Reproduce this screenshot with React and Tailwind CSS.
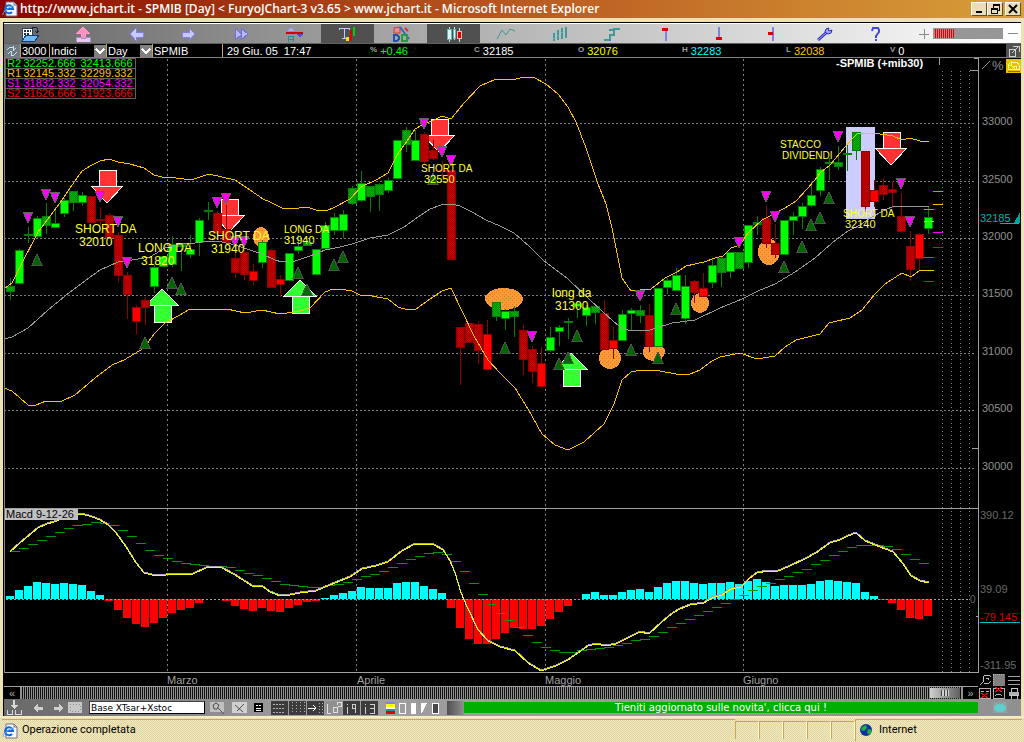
import React from 'react';

// [kind, bodyTop, bodyBottom, high, low]; capital letter = bright body
const candles = [
  ['g', 286, 292, 278, 300], ['G', 250, 284, 249, 284], ['g', 234, 236, 227, 243], ['G', 218, 237, 216, 238],
  ['g', 216, 226, 203, 234], ['G', 223, 228, 207, 228], ['G', 200, 214, 198, 217], ['g', 191, 203, 191, 211],
  ['G', 195, 203, 192, 206], ['r', 196, 223, 196, 223], ['r', 219, 221, 207, 225], ['r', 215, 238, 213, 238],
  ['r', 235, 276, 232, 282], ['r', 275, 295, 272, 319], ['R', 307, 322, 305, 334], ['r', 300, 308, 297, 325],
  ['G', 267, 287, 265, 293], ['G', 256, 267, 256, 267], ['G', 244, 265, 236, 267], ['g', 244, 247, 243, 271],
  ['G', 249, 255, 235, 258], ['G', 220, 243, 218, 256], ['g', 210, 212, 202, 220], ['r', 213, 234, 211, 234],
  ['r', 229, 243, 205, 243], ['r', 258, 273, 253, 278], ['r', 252, 275, 250, 280], ['R', 271, 281, 264, 285],
  ['G', 242, 263, 240, 268], ['r', 250, 288, 249, 288], ['R', 279, 285, 275, 297], ['G', 253, 281, 253, 281],
  ['G', 246, 251, 235, 254], ['g', 242, 246, 240, 246], ['G', 249, 275, 249, 275], ['G', 225, 249, 222, 249],
  ['G', 217, 231, 213, 235], ['G', 214, 231, 210, 238], ['g', 188, 204, 186, 205], ['G', 183, 201, 171, 202],
  ['g', 186, 197, 186, 212], ['g', 184, 195, 183, 211], ['G', 180, 191, 178, 193], ['G', 140, 179, 140, 179],
  ['g', 130, 145, 127, 152], ['G', 140, 161, 130, 161], ['r', 134, 162, 132, 165], ['r', 150, 159, 140, 160],
  ['r', 170, 172, 161, 178], ['r', 170, 260, 170, 260], ['r', 327, 348, 327, 385], ['r', 323, 343, 323, 343],
  ['r', 324, 351, 321, 364], ['R', 334, 370, 320, 370], ['g', 302, 317, 302, 321], ['G', 311, 319, 309, 330],
  ['g', 311, 317, 306, 337], ['r', 330, 360, 325, 375], ['r', 349, 372, 346, 383], ['R', 363, 387, 347, 387],
  ['G', 337, 351, 327, 352], ['G', 327, 332, 325, 346], ['g', 321, 323, 318, 339], ['G', 303, 307, 302, 318],
  ['G', 307, 316, 305, 326], ['g', 306, 313, 306, 324], ['r', 313, 350, 300, 350], ['R', 340, 349, 327, 359],
  ['G', 314, 341, 310, 341], ['G', 310, 314, 308, 331], ['g', 310, 316, 305, 323], ['r', 315, 347, 304, 352],
  ['G', 288, 347, 288, 347], ['G', 280, 288, 278, 294], ['G', 275, 291, 268, 291], ['G', 286, 319, 275, 324],
  ['r', 281, 293, 280, 303], ['R', 288, 297, 273, 297], ['G', 265, 283, 259, 288], ['g', 258, 273, 256, 287],
  ['G', 252, 272, 252, 278], ['g', 252, 269, 252, 269], ['G', 225, 263, 225, 268], ['G', 222, 225, 216, 235],
  ['r', 218, 244, 206, 248], ['r', 243, 255, 224, 258], ['G', 220, 255, 220, 255], ['G', 216, 221, 212, 235],
  ['G', 206, 217, 203, 229], ['G', 195, 206, 182, 207], ['G', 169, 191, 167, 196], ['g', 162, 164, 158, 180],
  ['g', 162, 167, 146, 170], ['g', 153, 155, 145, 171], ['g', 132, 151, 132, 160], ['r', 151, 207, 151, 212],
  ['R', 190, 202, 180, 207], ['r', 185, 195, 178, 200], ['r', 189, 193, 181, 208], ['r', 216, 232, 193, 233],
  ['r', 246, 270, 231, 281], ['R', 234, 259, 233, 271], ['G', 217, 229, 206, 234],
];

const candleFill = { G: '#00ff00', g: '#00b400', R: '#ff0000', r: '#cc0000' };
const candleEdge = { G: '#008000', g: '#008000', R: '#900000', r: '#900000' };

const upperBand = '4,289 12,283 20,267 38,232 48,219 60,203 70,188 82,171 92,165 100,161 109,159 118,162 130,164 144,168 154,175 162,177 176,178 191,180 209,174 222,177 235,180 250,190 263,199 270,202 282,208 291,209 307,207 316,210 326,211 335,207 350,199 361,187 376,180 388,173 393,163 397,155 407,141 415,129 424,124 432,121 442,116 451,119 464,103 480,86 496,79 516,79 524,77 533,77 546,84 558,94 568,107 576,122 586,148 598,184 606,204 612,228 618,258 622,278 631,291 640,290 651,289 665,278 677,272 686,266 704,262 715,258 723,256 731,248 740,245 748,233 762,220 776,213 785,208 796,201 808,188 814,181 821,172 830,165 840,153 851,140 857,134 865,133 880,134 893,136 902,140 910,138 920,141 929,141';
const middleBand = '4,339 12,337 28,328 48,310 65,296 82,283 100,270 118,262 132,260 150,257 165,248 180,244 195,243 210,241 222,242 235,245 250,250 262,254 275,260 282,262 295,261 310,256 325,250 340,247 352,244 370,238 388,235 404,227 418,217 430,209 441,205 452,204 460,206 472,212 486,220 500,226 514,233 530,247 543,260 568,279 590,300 614,322 622,328 631,331 650,330 672,323 695,320 720,308 742,299 758,291 775,284 795,272 815,258 832,243 848,231 860,225 870,218 885,210 894,206 905,207 920,206 929,206';
const lowerBand = '4,388 12,391 20,398 28,405 36,405 46,401 62,401 75,395 95,378 112,365 124,360 144,348 154,334 165,323 178,316 190,309 227,309 245,313 262,310 280,314 300,311 310,308 325,292 333,289 340,289 352,291 360,295 372,296 388,299 398,307 408,310 416,309 430,299 442,291 451,288 474,336 488,360 500,373 515,388 528,409 542,434 555,445 568,450 584,442 604,424 614,404 622,380 631,372 641,370 660,371 676,374 690,374 700,370 712,361 720,357 740,353 757,359 775,356 785,347 796,340 820,334 829,323 850,318 862,310 875,294 885,284 902,273 911,277 920,270 929,270';
const macdLine = '10,551 20,542 38,527 47,523 54,521 62,518 78,514 82,513 92,516 100,519 108,524 116,532 126,546 136,562 144,572 152,574 166,574 180,573 191,574 208,566 220,566 235,574 252,585 262,585 270,591 280,595 290,594 300,592 316,590 330,584 340,580 350,576 362,568 376,565 388,561 402,550 415,543 434,544 443,549 450,560 455,572 461,592 467,606 478,629 488,640 500,646 515,650 528,662 541,670 556,665 568,659 588,645 596,643 606,645 616,643 628,637 640,631 649,633 662,621 673,612 680,608 690,604 704,602 712,597 722,594 731,588 741,586 750,577 757,572 768,570 776,571 790,565 805,558 816,552 830,542 840,539 848,535 856,532 865,540 875,544 885,548 893,551 903,563 911,575 920,580 929,582';

const histogram = [
  3, 9, 13, 17, 16, 15, 16, 15, 14, 8, 4, -2, -11, -19, -25, -28, -24, -19, -14, -11, -9, -4, 0, 0, -2, -7, -10, -12, -9, -12, -13, -9, -6, -3, -2,
  1, 4, 6, 8, 12, 11, 11, 11, 16, 17, 17, 13, 10, 6, -9, -29, -40, -45, -45, -40, -34, -29, -30, -30, -27, -20, -13, -7,
  0, 5, 7, 4, 4, 7, 9, 10, 7, 12, 16, 18, 18, 16, 15, 16, 16, 17, 15, 18, 20, 17, 13, 14, 14, 14, 15, 18, 19, 18, 17, 16,
  7, 3, -1, -4, -11, -19, -20, -17,
];

const signal = [
  551, 548, 544, 540, 536, 532, 528, 525, 524, 522, 523, 525, 530, 536, 543, 550, 555, 558, 561, 563, 564, 565, 566, 566, 567, 570,
  573, 575, 578, 581, 584, 585, 586, 587, 587, 585, 584, 582, 579, 576, 574, 571, 567, 563, 559, 556, 553, 552, 554, 561, 571, 583,
  594, 604, 613, 620, 627, 635, 642, 647, 650, 652, 652, 650, 649, 648, 647, 645, 643, 640, 639, 636, 632, 627, 623, 619, 615, 611,
  607, 603, 599, 595, 590, 586, 583, 579, 576, 572, 569, 564, 560, 555, 551, 547, 545, 545, 545, 546, 549, 554, 559, 563,
];

const sellMarks = [
  [28, 212], [46, 189], [55, 192], [100, 191], [118, 216], [127, 257], [217, 197], [226, 193], [235, 236], [244, 236], [424, 118],
  [442, 146], [451, 155], [532, 331], [640, 290], [739, 237], [766, 191], [775, 211], [838, 131], [901, 178], [910, 216],
];
const buyMarks = [
  [37, 254], [172, 277], [181, 283], [145, 337], [298, 267], [307, 284], [334, 259], [343, 251], [433, 173], [505, 342], [559, 358],
  [568, 352], [577, 330], [631, 344], [658, 352], [676, 303], [802, 241], [784, 261], [811, 219], [820, 212], [829, 192],
];
const sellArrows = [[107, 170], [229, 199], [439, 119], [891, 132]];
const buyArrows = [[162, 289], [300, 280], [571, 353]];
const circles = [[504, 299, 19, 11], [261, 237, 8, 10], [610, 358, 11, 11], [654, 352, 11, 9], [700, 303, 9, 10], [769, 252, 11, 13]];
const notes = [
  ['SHORT DA', 75, 233, 12], ['32010', 79, 246, 12], ['LONG DA', 138, 252, 12], ['31820', 141, 265, 12],
  ['SHORT DA', 208, 240, 12], ['31940', 211, 253, 12], ['LONG DA', 284, 233, 10], ['31940', 284, 244, 11],
  ['SHORT DA', 421, 172, 10], ['32550', 424, 183, 11], ['long da', 552, 297, 12], ['31300', 555, 310, 12],
  ['STACCO', 780, 148, 10], ['DIVIDENDI', 782, 159, 10], ['SHORT DA', 843, 217, 10], ['32140', 845, 228, 11],
];
const priceTicks = [[33000, 123], [32500, 181], [32000, 238], [31500, 295], [31000, 353], [30500, 410], [30000, 468]];
const pivotTicks = [
  [933, 191, '#00ff00'], [933, 204, '#ffc000'], [924, 209, '#00ff00'], [924, 221, '#ffc000'], [933, 232, '#ff00ff'],
  [933, 247, '#ff0000'], [924, 257, '#ff00ff'], [924, 270, '#ffc000'], [924, 281, '#ff0000'],
];

const pivots = [
  ['R2', '32252.666', '32413.666', 'text-[#00ff00]'],
  ['R1', '32145.332', '32299.332', 'text-[#ffc000]'],
  ['S1', '31832.332', '32054.332', 'text-[#ff00ff]'],
  ['S2', '31626.666', '31923.666', 'text-[#ff0000]'],
];

const quotes = [
  ['%', '+0.46', 'text-[#00ff00]'],
  ['C', '32185', 'text-white'],
  ['O', '32076', 'text-[#ffff00]'],
  ['H', '32283', 'text-[#00ffff]'],
  ['L', '32038', 'text-[#ffc000]'],
  ['V', '0', 'text-white'],
];

const Icon = ({ w = 20, h = 16, smooth = false, children }) => (
  <svg
    width={w}
    height={h}
    viewBox={`0 0 ${w} ${h}`}
    fill="none"
    shapeRendering={smooth ? 'auto' : 'crispEdges'}
    aria-hidden="true"
  >
    {children}
  </svg>
);

const tools = [
  ['Open', (
    <>
      <path d="M2 2h10v10H2z" fill="#fff" stroke="#304060" />
      <path d="M4 4h2v2H4zM7 4h2v2H7zM4 7h2v2H4zM7 7h2v2H7zM10 4h1v2h-1z" fill="#203050" />
      <path d="M2 15l4-6h13l-4 6z" fill="#70b8f0" stroke="#103c80" />
      <path d="M11 3l3-2 3 1v4M15 5l2 2 2-2" stroke="#102040" />
    </>
  )],
  ['Upload', (
    <>
      <path d="M10 1l6 6h-4v5H8V7H4z" fill="#ff90c0" stroke="#ffa0d0" />
      <path d="M3 11h5v1h4v-1h5v5H3z" fill="#e8c8f0" stroke="#a890c8" />
    </>
  )],
  ['Back', <path d="M4 8l6-6v4h7v5h-7v4z" fill="#c8c8ff" stroke="#8080e0" />],
  ['Forward', <path d="M16 8l-6-6v4H3v5h7v4z" fill="#c8c8ff" stroke="#8080e0" />],
  ['Last', <path d="M3 2l6 6V2l7 6-7 6V9l-6 5z" fill="#b8b8ff" stroke="#7070d8" />],
  ['Compare', (
    <>
      <path d="M2 5l4-4 4 4z" fill="#b0b0c8" stroke="#8888d8" />
      <path d="M1 7h17" stroke="#d00000" strokeWidth="2" />
      <path d="M12 8h6l-3 4z" fill="#5050c0" />
      <path d="M3 16v-6h5v6M3 13h5" stroke="#209090" />
    </>
  )],
  ['Text', (
    <>
      <path d="M1 4V2h10v2M6 2v10M4 12h4" stroke="#c8c8ff" />
      <path d="M15 1h2v9h-2z" fill="#00d000" />
      <path d="M12 4h2v11h-2z" fill="#e00000" />
      <path d="M8 11h3v4H8z" fill="#ffe000" />
    </>
  )],
  ['Draw', (
    <>
      <path d="M3 2l6-1v6H3z" fill="#e09090" stroke="#c04040" />
      <path d="M9 1l9 12" stroke="#4060b0" strokeWidth="2" />
      <path d="M3 9h3l2 2v2l-2 2H3z" stroke="#2050b0" strokeWidth="2" />
      <path d="M11 9h5v6h-5z" stroke="#20a040" strokeWidth="2" />
      <path d="M14 2l3 3" stroke="#d03030" strokeWidth="2" />
    </>
  )],
  ['Candles', (
    <>
      <path d="M6 1v15M11 1v13M16 2v14" stroke="#b0f0f0" />
      <path d="M4 3h4v10H4zM10 3h2v9h-2z" fill="#d8ffff" stroke="#70b0b0" />
      <path d="M14 5h4v7h-4z" fill="#e00000" stroke="#ffb0b0" />
    </>
  )],
  ['Line', <path d="M1 13l5-9 4 5 4-6 5 2" stroke="#409898" />],
  ['Bars', (
    <>
      <path d="M5 15V7M9 14V4M13 13V2M17 12V1" stroke="#409898" strokeWidth="2" />
      <path d="M3 12h2M7 9h2M11 6h2" stroke="#80c8c8" />
    </>
  )],
  ['Steps', <path d="M2 14h6V9h4V3h6M7 4h5" stroke="#409898" strokeWidth="2" />],
  ['High marker', (
    <>
      <path d="M11 4v11" stroke="#8080e0" strokeWidth="2" />
      <path d="M7 2h6v3H7z" fill="#e00000" />
    </>
  )],
  ['Low marker', (
    <>
      <path d="M11 1v10" stroke="#8080e0" strokeWidth="2" />
      <path d="M8 11h6v3H8z" fill="#e00000" />
    </>
  )],
  ['Close marker', (
    <>
      <path d="M12 1v14" stroke="#8080e0" strokeWidth="2" />
      <path d="M7 6h5v3H7z" fill="#e00000" />
    </>
  )],
  ['Settings', (
    <>
      <path d="M4 14L13 6" stroke="#2828c0" strokeWidth="3" />
      <path d="M4 14L13 6" stroke="#a8b0ff" />
      <path d="M15 2l-3 1-1 3 3 2 3-1 1-3-3 1-1-1z" fill="#a8b0ff" stroke="#2828c0" />
    </>
  )],
  ['Help', <path d="M6 5l1-3h5l1 2v2l-3 4v2M10 13v2" stroke="#4048d8" strokeWidth="2" />],
];
const smoothTools = ['Settings', 'Help', 'Line', 'Draw'];

const IeIcon = () => (
  <svg width="16" height="16" viewBox="0 0 16 16" aria-hidden="true">
    <path d="M4 1h8l3 3v11H4z" fill="#f8f8ff" stroke="#707090" />
    <path d="M12 1v3h3" fill="none" stroke="#707090" />
    <path d="M10 11a4 4 0 1 1 1-3H3" fill="none" stroke="#1868d8" strokeWidth="2" />
    <path d="M1 14c-1-3 7-9 11-9" fill="none" stroke="#60b0f0" />
  </svg>
);

const TitleBar = () => (
  <header className="flex h-[18px] items-center gap-[2px] bg-linear-to-r from-[#8c0000] via-[#b85820] via-50% to-[#d8a038] pr-[3px] pl-[2px]">
    <IeIcon />
    <h1 className="flex-1 truncate font-['Open_Sans','Noto_Sans',sans-serif] text-xs leading-4 font-semibold text-white">
      http://www.jchart.it - SPMIB [Day] &lt; FuryoJChart-3 v3.65 &gt; www.jchart.it - Microsoft Internet Explorer
    </h1>
    <div className="flex">
      {[
        ['Minimize', <path d="M3 9h6" stroke="#000" strokeWidth="2" />],
        ['Restore', <path d="M4 5V1h6v6H8M4 2h6M2 5h6v5H2zM2 6h6" stroke="#000" />],
        ['Close', <path d="M2 2l8 8M10 2l-8 8" stroke="#000" strokeWidth="2" />],
      ].map(([label, icon]) => (
        <button
          key={label}
          type="button"
          aria-label={label}
          className="flex h-[14px] w-4 items-center justify-center border border-t-white border-r-[#605030] border-b-[#605030] border-l-white bg-[#eadfb4] last:ml-[2px]"
        >
          <Icon w={12} h={12} smooth={label === 'Close'}>{icon}</Icon>
        </button>
      ))}
    </div>
  </header>
);

const Toolbar = () => (
  <div className="flex h-[21px] items-stretch border-t border-b border-t-white border-b-[#606060] bg-linear-to-r from-[#686868] via-[#b0b0b0] via-45% to-white">
    {tools.map(([label, icon]) => (
      <button
        key={label}
        type="button"
        aria-label={label}
        className={`flex flex-1 items-center justify-center ${label === 'Text' || label === 'Candles' ? 'bg-[#505050]' : ''}`}
      >
        <Icon smooth={smoothTools.includes(label)}>{icon}</Icon>
      </button>
    ))}
    <div className="flex w-[118px] shrink-0 items-center gap-1 pl-4">
      <button type="button" aria-label="Zoom in">
        <Icon w={10} h={10}><path d="M5 0v10M0 5h10" stroke="#888" /></Icon>
      </button>
      <div className="flex h-[11px] w-[70px] items-center bg-[#969696] pl-[2px]" role="img" aria-label="Zoom level">
        <span className="h-[9px] w-5 bg-[repeating-linear-gradient(90deg,#e00000_0_1px,#a89090_1px_2px)]" />
      </div>
      <button type="button" aria-label="Zoom out">
        <Icon w={11} h={10}><path d="M1 4h10" stroke="#888" /></Icon>
      </button>
    </div>
  </div>
);

const DropDown = ({ label, value, width }) => (
  <div className={`relative flex items-center border-l border-[#c8a848] ${width}`}>
    <select aria-label={label} defaultValue={value} className="h-[14px] w-full appearance-none bg-transparent pl-px text-[11px] leading-[14px]">
      <option>{value}</option>
    </select>
    <span className="pointer-events-none absolute right-0 flex h-3 w-3 items-center justify-center bg-[#808080]">
      <Icon w={10} h={8}><path d="M1 2l4 4 4-4" stroke="#fff" strokeWidth="2" /></Icon>
    </span>
  </div>
);

const InfoBar = () => (
  <div className="flex h-[14px] items-stretch border-b border-[#808080] bg-black text-[11px] leading-[14px] text-white">
    <button type="button" aria-label="Refresh" className="flex w-4 items-center justify-center bg-[#707880]">
      <Icon w={14} h={12}>
        <path d="M2 5l3-3h3M8 1v5M12 7l-3 3H6M6 11V6M3 9l3-3M11 3L8 6" stroke="#c8e0f0" />
      </Icon>
    </button>
    <span className="w-[29px] border-l border-[#c8a848] pl-px">3000</span>
    <DropDown label="Market" value="Indici" width="w-[57px]" />
    <DropDown label="Period" value="Day" width="w-[46px]" />
    <span className="w-[70px] border-l border-[#c8a848] pl-px">SPMIB</span>
    <span className="w-[148px] border-l border-[#c8a848] pl-1 whitespace-pre">29 Giu. 05  17:47</span>
    <dl className="grid flex-1 grid-cols-6">
      {quotes.map(([key, value, color]) => (
        <div key={key} className="flex gap-[3px]">
          <dt className="text-[8px] leading-3 font-bold text-[#a0a0a0]">{key}</dt>
          <dd className={color}>{value}</dd>
        </div>
      ))}
    </dl>
    <button type="button" aria-label="Detach" className="ml-3 flex w-[15px] items-center justify-center bg-[#505050]">
      <Icon w={12} h={12}><path d="M1 4h6v7H1zM5 1h6v6M4 8l6-6" stroke="#d0d0d0" /></Icon>
    </button>
  </div>
);

const ChartGrid = () => (
  <g stroke="#808080" strokeDasharray="2 2">
    {priceTicks.map(([price, y]) => <path key={price} d={`M4 ${y + 0.5}H975`} />)}
    {[167, 356, 545, 743].map((x) => <path key={x} d={`M${x + 0.5} 59V673`} strokeDasharray="2 3" />)}
    {[942, 951, 960, 969].map((x) => <path key={x} d={`M${x + 0.5} 71V673`} strokeDasharray="1 3" />)}
  </g>
);

const Candle = ({ index, data }) => {
  const [kind, top, bottom, high, low] = data;
  const x = 6 + index * 9;
  return (
    <g>
      <path d={`M${x + 4.5} ${high}V${low}`} stroke={candleEdge[kind]} />
      <rect x={x} y={top} width="9" height={bottom - top} fill={candleEdge[kind]} />
      {bottom - top > 3 && <rect x={x + 1} y={top + 1} width="7" height={bottom - top - 2} fill={candleFill[kind]} />}
      {(kind === 'g' || kind === 'r') && bottom - top > 3 && (
        <rect x={x + 1} y={top + 1} width="7" height={bottom - top - 2} fill="url(#dither)" />
      )}
    </g>
  );
};

const Chart = () => (
  <svg
    viewBox="4 58 1017 615"
    className="block h-auto w-full bg-black font-['Liberation_Sans',Arial,sans-serif]"
    shapeRendering="crispEdges"
    fill="none"
    role="img"
    aria-label="SPMIB daily chart with MACD"
  >
    <defs>
      <pattern id="dither" width="2" height="2" patternUnits="userSpaceOnUse">
        <path d="M0 0h1v1H0zM1 1h1v1H1z" fill="#000" fillOpacity="0.2" />
      </pattern>
      <pattern id="dots" width="4" height="4" patternUnits="userSpaceOnUse">
        <path d="M0 0h1v1H0zM2 2h1v1H2z" fill="#806040" fillOpacity="0.4" />
      </pattern>
    </defs>
    <ChartGrid />

    <rect x="846" y="127" width="29" height="92" fill="#ccccff" />
    {circles.map(([cx, cy, rx, ry]) => (
      <g key={cx}>
        <ellipse cx={cx} cy={cy} rx={rx} ry={ry} fill="#ff9933" />
        <ellipse cx={cx} cy={cy} rx={rx} ry={ry} fill="url(#dots)" />
      </g>
    ))}
    {sellArrows.map(([x, y]) => (
      <path key={x} d={`M${x - 8} ${y}h17v16h7l-16 17l-16 -17h8z M${x - 8} ${y + 16}h17`} fill="#ff3333" stroke="#fff" />
    ))}
    {buyArrows.map(([x, y]) => (
      <path key={x} d={`M${x} ${y}l16 16h-7v17h-17v-17h-8z M${x - 8} ${y + 16}h17`} fill="#33ff33" stroke="#fff" />
    ))}

    {candles.map((data, index) => <Candle key={index} index={index} data={data} />)}

    <polyline points={middleBand} stroke="#989898" />
    <polyline points={upperBand} stroke="#ffc000" />
    <polyline points={lowerBand} stroke="#ffc000" />

    {sellMarks.map(([x, y]) => (
      <path key={`${x}-${y}`} d={`M${x - 5} ${y}h10l-5 11z`} fill="#ff00ff" stroke="#606060" />
    ))}
    {buyMarks.map(([x, y]) => (
      <path key={`${x}-${y}`} d={`M${x - 5} ${y + 11}h10l-5 -11z`} fill="#006600" stroke="#505050" />
    ))}
    {pivotTicks.map(([x, y, color]) => <path key={y} d={`M${x} ${y + 0.5}h10`} stroke={color} />)}

    <g fill="#ffff33">
      {notes.map(([text, x, y, size]) => <text key={`${x}-${y}`} x={x} y={y} fontSize={size}>{text}</text>)}
    </g>
    <text x="836" y="67" fontSize="11" fontWeight="bold" fill="#fff">-SPMIB (+mib30)</text>

    {/* MACD pane */}
    <path d="M4 508.5H978M4 672.5H978" stroke="#a0a0a0" />
    {histogram.map((value, index) => (
      <rect
        key={index}
        x={6 + index * 9}
        y={value > 0 ? 599 - value : 599}
        width="8"
        height={Math.abs(value)}
        fill={value > 0 ? '#00ffff' : '#ff0000'}
      />
    ))}
    <path d="M6 599.5H970" stroke="#a0a0a0" strokeDasharray="2 2" />
    {signal.map((y, index) => <path key={index} d={`M${10 + index * 9} ${y + 0.5}h10`} stroke="#009900" />)}
    <polyline points={macdLine} stroke="#a8a8a8" />
    <polyline points={macdLine} stroke="#ffff00" transform="translate(0 1)" />
    <rect x="4" y="509" width="74" height="11" fill="#c0c0c0" />
    <text x="6" y="518" fontSize="11" fill="#000">Macd 9-12-26</text>

    {/* axis */}
    <path d="M4.500 58V673" stroke="#808080" />
    <path d="M974 58h4v615M970 70.500h8M939.500 58v7M972 448.500h6M976 616.500h3" stroke="#a0a0a0" />
    <g fontSize="11" fill="#909090">
      {priceTicks.map(([price, y]) => <text key={price} x="982" y={y + 2}>{price}</text>)}
    </g>
    <text x="980" y="222" fontSize="11" fill="#00b0b0">32185</text>
    <path d="M1000 223.500h19" stroke="#00b0b0" />
    <path d="M1014 223l6-11v11z" fill="#00a0a0" />
    <g fontSize="11" fill="#686868">
      <text x="980" y="519">390.12</text>
      <text x="980" y="593">39.09</text>
      <text x="970" y="603" fontSize="10">0</text>
      <text x="980" y="669">-311.95</text>
    </g>
    <text x="980" y="621" fontSize="11" fill="#d00000">-79.145</text>
    <path d="M980 622.500h40" stroke="#00c0c0" />
    <path d="M982 69l8-8" stroke="#909090" />
    <text x="992" y="70" fontSize="13" fill="#909090">%</text>
    <rect x="1006" y="59" width="15" height="14" fill="#f0c000" />
    <path d="M1008 69v-4h3v-3l-3 3M1011 62h6l2 3v4h-3v-3h-4l3 3h-7" stroke="#fff8a0" />
    <path d="M1008 71.500h12" stroke="#907000" />
  </svg>
);

const PivotTable = () => (
  <table className="absolute top-0 left-[1px] border-collapse text-[11px] leading-[9px]">
    <tbody>
      {pivots.map(([name, first, second, color]) => (
        <tr key={name} className={`h-[10px] border border-[#606060] ${color}`}>
          <th scope="row" className="w-[18px] p-0 pl-px text-left font-normal">{name}</th>
          <td className="w-[57px] p-0">{first}</td>
          <td className="w-[55px] p-0">{second}</td>
        </tr>
      ))}
    </tbody>
  </table>
);

const cornerIcons = [
  ['Search', <path d="M1 11l3-3M4 8V3l2-2h4l2 2v4l-2 2H5M7 4h2v2" stroke="#c0c0c0" />],
  ['Pattern', <path d="M0 0h12v12H0z" fill="#808080" stroke="#b0b0b0" strokeDasharray="1 1" />],
  ['List', <path d="M0 2h12M0 6h12M0 10h12" stroke="#a0a0a0" />],
  ['Remove lower', (
    <>
      <path d="M0 1h11v10H0zM2 4h3M7 4h3" stroke="#b0b0b0" />
      <path d="M2 6l7 5M9 6l-7 5" stroke="#f00" />
    </>
  )],
  ['Remove upper', (
    <>
      <path d="M0 1h11v10H0zM2 9l2-2h3l2 2" stroke="#b0b0b0" />
      <path d="M2 0l7 5M9 0L2 5" stroke="#f00" />
    </>
  )],
  ['Print', (
    <>
      <path d="M1 5h10v4H1z" fill="#b0b0b0" />
      <path d="M3 5V1h6v4M3 8h6v4H3z" stroke="#c8c8c8" />
    </>
  )],
];

const TimeAxis = () => (
  <div className="flex bg-black">
    <div className="min-w-0 flex-1">
      <div className="grid h-[14px] grid-cols-[163fr_190fr_188fr_198fr_235fr] border-b border-[#a0a0a0] text-[11px] leading-[14px] text-[#a0a0a0]">
        <span />
        <span>Marzo</span>
        <span>Aprile</span>
        <span>Maggio</span>
        <span>Giugno</span>
      </div>
      <div className="flex h-3 items-stretch">
        <button type="button" aria-label="Scroll left" className="w-[17px] border-r border-[#909090] text-[11px] leading-[10px] text-[#b0b0b0]">«</button>
        <div className="flex flex-1 justify-end bg-[repeating-linear-gradient(90deg,#909090_0_1px,#101010_1px_2px)] py-px">
          <div className="mr-[2px] flex w-[30px] items-center justify-center bg-linear-to-r from-[#d0d0d0] to-[#606060]">
            <span className="h-[6px] w-2 bg-[repeating-linear-gradient(90deg,#404040_0_1px,#d0d0d0_1px_3px)]" />
          </div>
        </div>
        <button type="button" aria-label="Scroll right" className="w-4 border-l border-[#909090] text-[11px] leading-[10px] text-[#b0b0b0]">»</button>
      </div>
    </div>
    <div className="grid w-[43px] grid-cols-3 place-items-center">
      {cornerIcons.map(([label, icon]) => (
        <button key={label} type="button" aria-label={label}><Icon w={12} h={12}>{icon}</Icon></button>
      ))}
    </div>
  </div>
);

const layoutTools = [
  ['Horizontal grid', <path d="M2 3h12M2 7h12M2 11h12" stroke="#b0b0b0" strokeDasharray="2 1" />],
  ['Vertical grid', <path d="M3 1v12M7 1v12M11 1v12M15 1v12" stroke="#b0b0b0" strokeDasharray="1 2" />],
  ['Align right', (
    <>
      <path d="M1 7h8M6 4l3 3-3 3" stroke="#fff" />
      <path d="M12 2v11M15 2v11" stroke="#b0b0b0" strokeDasharray="1 2" />
    </>
  )],
  ['Link', <path d="M2 3v9h4M8 6h4v5H8zM12 4V1h4v4h-3" stroke="#e0e0e0" />],
  ['Interval 9', <path d="M4 6v7M4 3v1M9 3h3v4H9zM12 7v5" stroke="#d0d0d0" />],
  ['Interval 3', <path d="M4 6v7M4 3v1M9 3h4v4H9M13 7v5H9" stroke="#d0d0d0" />],
];

const BottomBar = () => (
  <div className="flex h-[17px] items-center bg-linear-to-r from-[#686868] via-[#a0a0a0] via-30% to-[#909090]">
    <button type="button" aria-label="Save" className="ml-[2px] flex w-[26px]">
      <Icon w={16} h={15}>
        <path d="M7 0h2v5h3l-4 4-4-4h3z" fill="#d8d8d8" />
        <path d="M1 10v4h5v-4M9 10v4h6v-4" stroke="#d8d8d8" />
      </Icon>
    </button>
    <button type="button" aria-label="Undo" className="flex w-5">
      <Icon w={14} h={12}><path d="M1 6l5-4v3h5v3H6v2z" fill="#d0d0d0" /></Icon>
    </button>
    <button type="button" aria-label="Redo" className="flex w-4">
      <Icon w={14} h={12}><path d="M12 6L7 2v3H2v3h5v2z" fill="#d0d0d0" /></Icon>
    </button>
    <button type="button" aria-label="Template" className="flex w-[21px]">
      <Icon w={15} h={13}>
        <path d="M0 1h14v11H0z" fill="#c8c8c8" />
        <path d="M2 3h10v7H2z" stroke="#909090" strokeDasharray="1 2" />
      </Icon>
    </button>
    <input
      aria-label="Template name"
      defaultValue="Base XTsar+Xstoc"
      className="h-[13px] w-[116px] border border-t-[#404040] border-l-[#404040] bg-white px-px font-['DejaVu_Sans',sans-serif] text-[9px] leading-[11px] text-black"
    />
    <button type="button" aria-label="Search template" className="ml-[5px] flex w-[22px]">
      <Icon w={16} h={14} smooth>
        <path d="M0 1h14v10H0z" fill="#c0c0c0" />
        <path d="M3 4l3-2 3 2-2 4H4zM8 7l6 6" stroke="#505050" />
      </Icon>
    </button>
    <button type="button" aria-label="Delete template" className="flex w-[22px]">
      <Icon w={16} h={14} smooth>
        <path d="M0 1h15v11H0z" fill="#d0d0d0" />
        <path d="M3 4l8 7M12 3l-7 7" stroke="#505050" />
      </Icon>
    </button>
    <button type="button" aria-label="Table" className="flex w-[17px]">
      <Icon w={10} h={12}><path d="M0 1h9v9H0z" fill="#000" /><path d="M2 3h2M5 3h2M2 6h5M2 8h5" stroke="#fff" /></Icon>
    </button>
    <div className="flex gap-px">
      {layoutTools.map(([label, icon]) => (
        <button
          key={label}
          type="button"
          aria-label={label}
          className={`flex h-[14px] w-[17px] items-center justify-center ${label === 'Link' ? 'bg-[#909090]' : 'bg-[#3c3c3c]'}`}
        >
          <Icon w={17} h={14}>{icon}</Icon>
        </button>
      ))}
    </div>
    <div className="ml-2 flex items-center gap-[3px]">
      <button type="button" aria-label="Colors" className="flex">
        <Icon w={9} h={12}>
          <path d="M0 0h9v2H0z" fill="#8080ff" />
          <path d="M0 2h9v3H0z" fill="#ffff00" />
          <path d="M0 5h9v2H0z" fill="#fff" />
          <path d="M0 7h9v2H0z" fill="#309090" />
          <path d="M0 9h9v3H0z" fill="#e00000" />
        </Icon>
      </button>
      {[
        ['Hollow', <path d="M1 1h6v10H1z" stroke="#fff" />],
        ['Filled', <path d="M2 1h5v11H2z" fill="#fff" />],
        ['Half', <path d="M1 1h6L2 11H1z" fill="#fff" />],
        ['Dark', <path d="M1 1h6v10H1z" fill="#484848" stroke="#fff" />],
      ].map(([label, icon]) => (
        <button key={label} type="button" aria-label={label} className="flex"><Icon w={8} h={12}>{icon}</Icon></button>
      ))}
    </div>
    <span className="ml-2 h-[14px] w-[17px] bg-linear-to-r from-[#505050] to-[#909090]" />
    <a
      href="#news"
      className="h-[11px] flex-1 bg-[#00b000] text-center font-['DejaVu_Sans',sans-serif] text-[10px] leading-[11px] text-white"
    >
      Tieniti aggiornato sulle novita', clicca qui !
    </a>
    <span className="flex w-[43px] justify-center">
      <Icon w={16} h={12} smooth>
        <path d="M1 0h14v11H1z" fill="#90a0a0" />
        <ellipse cx="8" cy="6" rx="6" ry="4" fill="#60d0d0" />
      </Icon>
    </span>
  </div>
);

const StatusBar = () => (
  <footer className="flex h-[26px] items-center border-t-2 border-[#f4ecc4] bg-[#e2d8a0] bg-[repeating-conic-gradient(#f2ebc8_0_25%,#dfd39a_0_50%)] bg-size-[2px_2px] px-[2px] font-[Roboto,'Noto_Sans',sans-serif] text-[11px] text-black">
    <div className="flex h-[22px] flex-1 items-center gap-1 border-t border-[#c8a850]">
      <IeIcon />
      <span>Operazione completata</span>
    </div>
    {[0, 1, 2, 3, 4].map((cell) => (
      <div key={cell} className="h-[18px] w-6 border-t border-r border-l border-[#c8a850] border-r-[#fffbe0]" />
    ))}
    <div className="flex h-[22px] w-[167px] items-center gap-[6px] border-t border-l border-[#c8a850] pl-1">
      <svg width="13" height="13" viewBox="0 0 13 13" aria-hidden="true">
        <circle cx="6" cy="6" r="6" fill="#1030a0" />
        <path d="M2 3l4-2 1 3-3 3-3-1zM8 5l4 1-2 5-3-2z" fill="#20b040" />
      </svg>
      <span>Internet</span>
    </div>
  </footer>
);

const App = () => (
  <div className="min-w-[900px] bg-[#e8dfb0] font-['Liberation_Sans',Arial,sans-serif]">
    <TitleBar />
    <main className="border-t-4 border-r-[3px] border-l-[3px] border-[#ece2b4]">
      <div className="border-t border-l border-black">
        <Toolbar />
        <InfoBar />
        <div className="relative">
          <Chart />
          <PivotTable />
        </div>
        <TimeAxis />
        <BottomBar />
      </div>
    </main>
    <StatusBar />
  </div>
);

export default App;
